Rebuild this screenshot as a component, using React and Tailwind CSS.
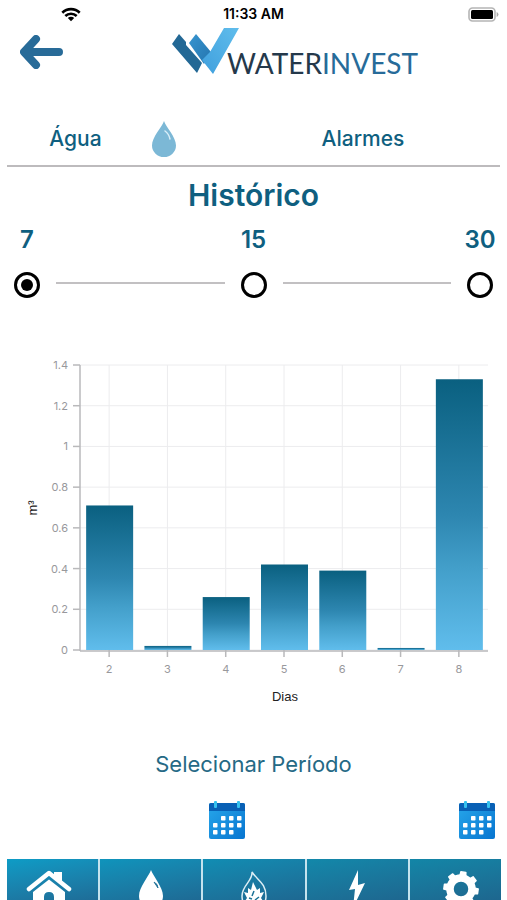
import React, { useState } from "react";

const periods = [7, 15, 30];

const readings = [
  { day: 2, value: 0.71 },
  { day: 3, value: 0.02 },
  { day: 4, value: 0.26 },
  { day: 5, value: 0.42 },
  { day: 6, value: 0.39 },
  { day: 7, value: 0.01 },
  { day: 8, value: 1.33 },
];

const ticks = [0, 0.2, 0.4, 0.6, 0.8, 1, 1.2, 1.4];

function StatusBar() {
  return (
    <div className="flex h-7 shrink-0 items-center pr-2">
      <div className="flex-1">
        <svg viewBox="0 0 20 15" className="ml-[61px] h-[15px] w-5" aria-label="Wi-Fi">
          <g fill="none" stroke="#000" strokeWidth="2.6">
            <path d="M1.3 5.7a12.4 12.4 0 0 1 17.4 0" />
            <path d="M4.3 9a8.2 8.2 0 0 1 11.4 0" />
          </g>
          <path d="M10 14.3 6.8 11a4.6 4.6 0 0 1 6.4 0z" />
        </svg>
      </div>
      <span className="pl-2 text-sm font-semibold text-black">11:33 AM</span>
      <div className="flex flex-1 justify-end">
        <svg viewBox="0 0 31 15" className="h-[15px] w-[31px]" aria-label="Battery">
          <rect x="1" y="1" width="26" height="13" rx="3.5" fill="#fff" stroke="#b5b5b5" strokeWidth="1.6" />
          <rect x="3" y="3" width="22" height="9" rx="1.5" />
          <path d="M28.6 5v5q1.9-.8 1.9-2.5T28.6 5z" fill="#aaa" />
        </svg>
      </div>
    </div>
  );
}

function Logo() {
  return (
    <div className="flex items-end">
      <svg viewBox="0 0 67 47" className="h-[47px] w-[67px]" aria-hidden="true">
        <defs>
          <linearGradient id="logoMid" x1="0" y1="0" x2="1" y2="1">
            <stop offset="0" stopColor="#3795d0" />
            <stop offset="1" stopColor="#2474ae" />
          </linearGradient>
          <linearGradient id="logoLight" x1="1" y1="0" x2="0" y2="1">
            <stop offset="0" stopColor="#60bdec" />
            <stop offset="1" stopColor="#3f9fdd" />
          </linearGradient>
        </defs>
        <path d="M7 6l7 8v3l16 18-5 10L0 16z" fill="#236895" />
        <path d="M17 15l7-9 15 18-7 12z" fill="url(#logoMid)" />
        <path d="M52 0h15L41 46 30 32l8-8z" fill="url(#logoLight)" />
      </svg>
      <span className="-ml-3 font-[Lato,sans-serif] text-[28px] leading-6 font-normal text-[#25394b]">
        WATER<span className="text-[#276b99]">INVEST</span>
      </span>
    </div>
  );
}

function Header() {
  return (
    <header className="flex h-[68px] shrink-0 items-start pl-5">
      <button type="button" aria-label="Voltar" className="mt-[7px] mr-[109px]">
        <svg viewBox="0 0 43 34" className="h-[34px] w-[43px]">
          <path
            d="M16 4 4 17l12 13M5 17h34"
            fill="none"
            stroke="#286b98"
            strokeWidth="8"
            strokeLinecap="round"
            strokeLinejoin="round"
          />
        </svg>
      </button>
      <Logo />
    </header>
  );
}

function Tabs() {
  return (
    <nav className="mx-[7px] grid h-[71px] shrink-0 grid-cols-[137px_40px_1fr] items-center border-b-2 border-[#bdbbbd] pt-4 text-[21px] font-medium text-[#0f5f80]">
      <a href="#agua" className="text-center">Água</a>
      <svg viewBox="0 0 24 36" className="h-9 w-6 justify-self-center" aria-hidden="true">
        <path d="M12 0c2 6 12 16 12 24.5a12 11.5 0 0 1-24 0C0 16 10 6 12 0z" fill="#7cb8d6" />
        <path d="M13 10q4 3 5 8" fill="none" stroke="#d9eef8" strokeWidth="1.5" strokeLinecap="round" />
      </svg>
      <a href="#alarmes" className="pl-[42px] text-center">Alarmes</a>
    </nav>
  );
}

function PeriodPicker() {
  const [selected, setSelected] = useState(7);

  return (
    <fieldset>
      <div className="flex justify-between px-[11px] text-2xl leading-8 font-semibold text-[#0f5f80]">
        {periods.map((days) => (
          <label key={days} htmlFor={`period-${days}`} className="flex w-8 justify-center">
            {days}
          </label>
        ))}
      </div>
      <div className="mt-4 flex items-center gap-4 px-[14px]">
        {periods.map((days, i) => (
          <React.Fragment key={days}>
            {i > 0 && <div className="mb-1 h-[2px] flex-1 bg-[#c2c0c2]" />}
            <input
              id={`period-${days}`}
              type="radio"
              name="period"
              checked={selected === days}
              onChange={() => setSelected(days)}
              className="h-[26px] w-[26px] appearance-none rounded-full border-3 border-black bg-white bg-clip-content p-1 checked:bg-black"
            />
          </React.Fragment>
        ))}
      </div>
    </fieldset>
  );
}

function Chart() {
  const left = 80;
  const right = 488;
  const bottom = 300;
  const top = 15;
  const step = (right - left) / readings.length;
  const y = (value) => bottom - (value / 1.4) * (bottom - top);
  const x = (i) => left + step * (i + 0.5);

  return (
    <svg viewBox="0 0 507 370" className="w-full" role="img" aria-label="Consumo em m³ por dia">
      <defs>
        <linearGradient id="bar" x1="0" y1="0" x2="0" y2="1">
          <stop offset="0" stopColor="#0a6080" />
          <stop offset="0.5" stopColor="#2d86b0" />
          <stop offset="0.7" stopColor="#439fca" />
          <stop offset="1" stopColor="#60bdec" />
        </linearGradient>
      </defs>
      <g stroke="#ececee" strokeWidth="1">
        {ticks.map((t) => (
          <line key={t} x1={left} x2={right} y1={y(t)} y2={y(t)} />
        ))}
        {readings.map((r, i) => (
          <line key={r.day} x1={x(i)} x2={x(i)} y1={top} y2={bottom} />
        ))}
      </g>
      <g stroke="#b9b9bb" strokeWidth="1.5">
        <path d={`M${left} ${top}V${bottom + 1}`} />
        <path d={`M${left} ${bottom + 1}H${right}`} />
        {ticks.map((t) => (
          <line key={t} x1={left - 7} x2={left} y1={y(t)} y2={y(t)} />
        ))}
        {readings.map((r, i) => (
          <line key={r.day} x1={x(i)} x2={x(i)} y1={bottom} y2={bottom + 7} />
        ))}
      </g>
      {readings.map((r, i) => (
        <rect key={r.day} x={x(i) - 23} y={y(r.value)} width="47" height={bottom - y(r.value)} fill="url(#bar)" />
      ))}
      <g fill="#98989c" fontSize="11">
        {ticks.map((t) => (
          <text key={t} x={left - 12} y={y(t) + 4} textAnchor="end">{t}</text>
        ))}
        {readings.map((r, i) => (
          <text key={r.day} x={x(i)} y={bottom + 23} textAnchor="middle">{r.day}</text>
        ))}
      </g>
      <g fill="#222" fontSize="13" textAnchor="middle" className="font-['Liberation_Sans',sans-serif]">
        <text x={(left + right) / 2 + 1} y="351">Dias</text>
        <text transform="translate(37 158) rotate(-90)">m³</text>
      </g>
    </svg>
  );
}

function CalendarIcon() {
  const days = [
    [14, 15], [22, 15], [30, 15],
    [6, 22], [14, 22], [22, 22], [30, 22],
    [6, 29], [14, 29], [22, 29],
  ];

  return (
    <svg viewBox="0 0 36 38" className="h-[38px] w-9" aria-hidden="true">
      <defs>
        <linearGradient id="calendar" x1="0" y1="0" x2="1" y2="1">
          <stop offset="0" stopColor="#27a7ea" />
          <stop offset="1" stopColor="#0875d0" />
        </linearGradient>
      </defs>
      <rect y="2" width="36" height="36" rx="2" fill="url(#calendar)" />
      <path d="M2 2h32q2 0 2 2v6H0V4q0-2 2-2z" fill="#0860b5" />
      <rect x="5" width="3" height="7" rx="1" fill="#35c1ee" />
      <rect x="28" width="3" height="7" rx="1" fill="#35c1ee" />
      {days.map(([cx, cy]) => (
        <rect key={`${cx}-${cy}`} x={cx - 2} y={cy} width="4.5" height="4.5" rx="0.8" fill="#fff" />
      ))}
    </svg>
  );
}

function HomeIcon() {
  return (
    <svg viewBox="0 0 46 42" className="mr-2 h-[42px] w-[46px]">
      <path d="M3 19 23 3l20 16" fill="none" stroke="#fff" strokeWidth="4.5" strokeLinecap="round" strokeLinejoin="round" />
      <path d="M28 2h8v11l-8-6z" fill="#fff" />
      <path d="M7 22 23 9.500l16 12.500v20H28V27q0-5-5-5t-5 5v15H7z" fill="#fff" />
    </svg>
  );
}

function DropIcon() {
  return (
    <svg viewBox="0 0 26 38" className="h-[38px] w-[26px]">
      <path d="M13 0c2 6 12 17 12 26a12 12 0 0 1-24 0C1 17 11 6 13 0z" fill="#fff" />
      <path d="M16 12q4 2 4 6z" fill="#28759b" stroke="#28759b" />
    </svg>
  );
}

function FlameIcon() {
  return (
    <svg viewBox="0 0 28 40" className="h-10 w-7">
      <path
        d="M12 2c1 9-10 13-10 24 0 8 5 13 12 13s12-5 12-13C26 13 17 10 12 2z"
        fill="none"
        stroke="#dceef5"
        strokeWidth="1.5"
      />
      <path d="M13 12l4 8 3-2v5l4-1-3 6 2 3-5 6h-8l-5-6 2-3-3-6 4 1v-5l3 2z" fill="#fff" />
      <path d="M14 21l-2 5M9 28l3 1M19 27l-4 3" stroke="#1b7196" strokeWidth="1.5" />
    </svg>
  );
}

function BoltIcon() {
  return (
    <svg viewBox="0 0 18 38" className="h-[38px] w-[18px]">
      <path d="M10 0 1 20l6-1-2 19 12-25-7 2z" fill="#fff" />
    </svg>
  );
}

function GearIcon() {
  return (
    <svg viewBox="0 0 38 38" className="ml-3 h-[38px] w-[38px]">
      {[0, 45, 90, 135, 180, 225, 270, 315].map((angle) => (
        <path key={angle} d="M16 7l.5-5h5l.5 5z" fill="#fff" stroke="#fff" strokeWidth="1.5" strokeLinejoin="round" transform={`rotate(${angle + 8} 19 19)`} />
      ))}
      <circle cx="19" cy="19" r="11" fill="none" stroke="#fff" strokeWidth="7.5" />
    </svg>
  );
}

const navItems = [
  { label: "Início", icon: HomeIcon, className: "from-[#0c9cc6]" },
  { label: "Água", icon: DropIcon, className: "from-[#0e94bc]" },
  { label: "Gás", icon: FlameIcon, className: "from-[#108db3]" },
  { label: "Energia", icon: BoltIcon, className: "from-[#1288aa]" },
  { label: "Definições", icon: GearIcon, className: "from-[#1286a7]" },
];

function BottomNav() {
  return (
    <nav className="mx-[6px] ml-[7px] grid shrink-0 grid-cols-[9fr_10fr_10fr_10fr_9fr] gap-[2px] bg-[#c5e3ee]">
      {navItems.map(({ label, icon: Icon, className }) => (
        <button
          key={label}
          type="button"
          aria-label={label}
          className={`flex h-16 items-start justify-center bg-linear-170 to-[#1f5a85] pt-[11px] ${className}`}
        >
          <Icon />
        </button>
      ))}
    </nav>
  );
}

export default function App() {
  return (
    <div className="flex h-screen flex-col overflow-hidden bg-white font-[Inter,sans-serif]">
      <StatusBar />
      <Header />
      <Tabs />
      <main className="shrink-0">
        <h1 className="pt-2 text-center text-3xl leading-10 font-semibold text-[#0f5f80]">Histórico</h1>
        <div className="mt-[9px]">
          <PeriodPicker />
        </div>
        <div className="mt-[52px]">
          <Chart />
        </div>
        <h2 className="mt-7 text-center text-[22px] leading-8 text-[#256985]">Selecionar Período</h2>
        <div className="mt-[21px] grid grid-cols-2 gap-[6px] pr-3 pb-5">
          <button type="button" aria-label="Data inicial" className="justify-self-end">
            <CalendarIcon />
          </button>
          <button type="button" aria-label="Data final" className="justify-self-end">
            <CalendarIcon />
          </button>
        </div>
      </main>
      <BottomNav />
    </div>
  );
}
